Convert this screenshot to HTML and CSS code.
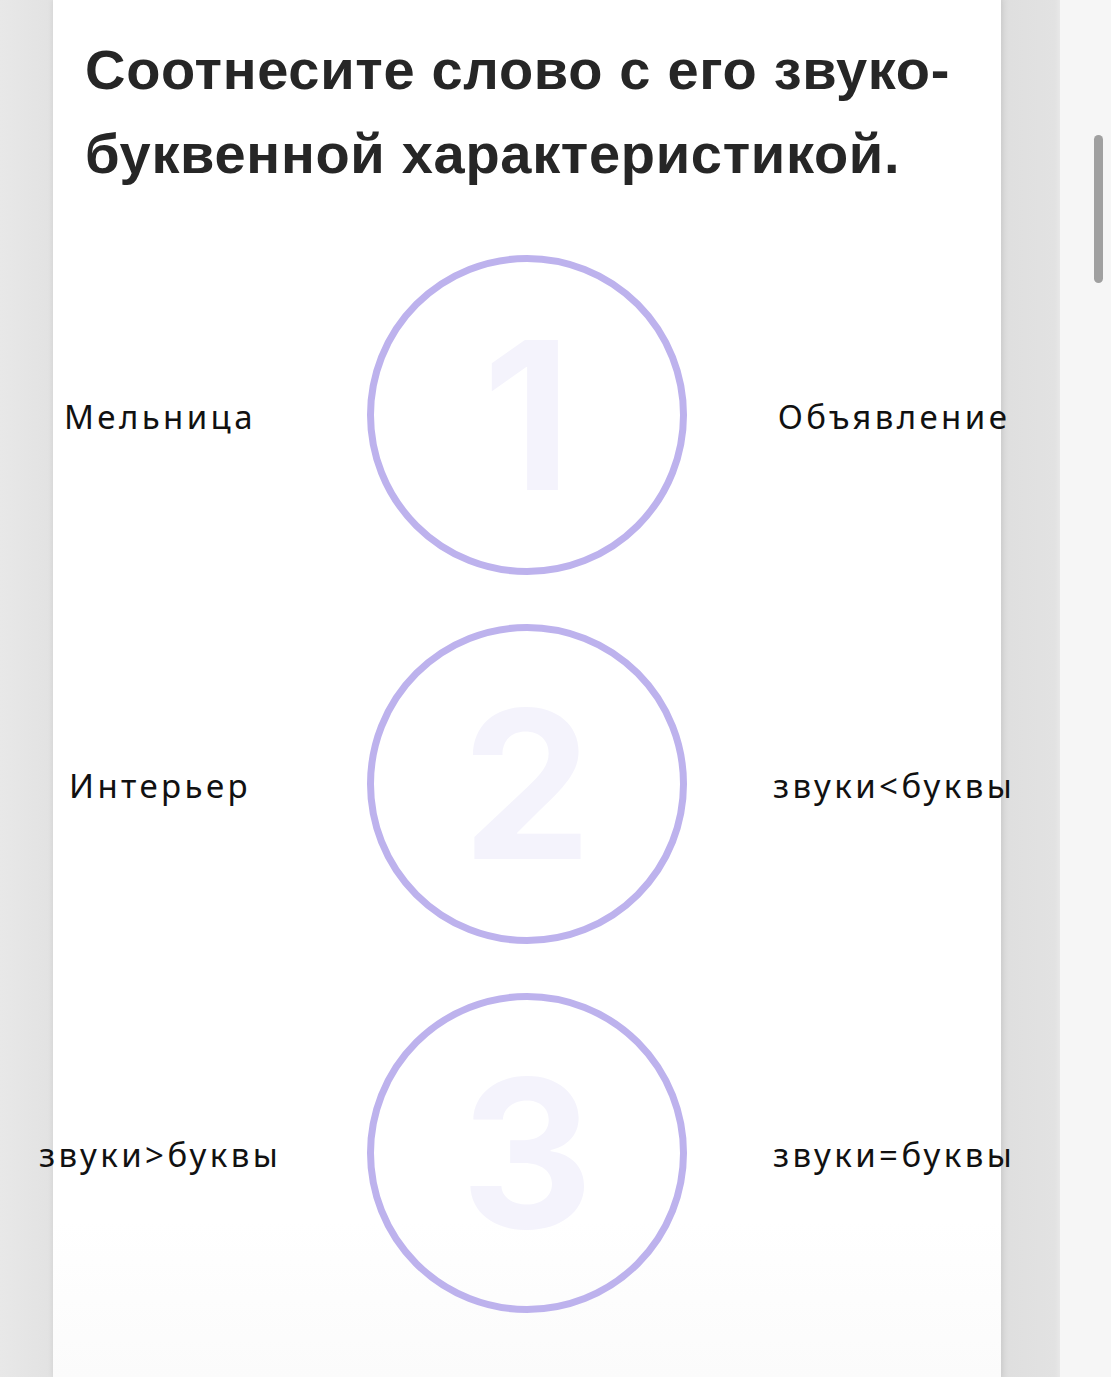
FILE: index.html
```html
<!DOCTYPE html>
<html lang="ru">
<head>
<meta charset="utf-8">
<title>Соотнесите слово</title>
<link rel="stylesheet" href="styles.css">
</head>
<body>
<div class="viewport">
  <main class="sheet">
    <h1 class="title">Соотнесите слово с его звуко-буквенной характеристикой.</h1>
    <div class="match">
      <span class="word">Мельница</span>
      <div class="ring"><span class="num">1</span></div>
      <span class="word">Объявление</span>

      <span class="word">Интерьер</span>
      <div class="ring"><span class="num">2</span></div>
      <span class="word">звуки&lt;буквы</span>

      <span class="word">звуки&gt;буквы</span>
      <div class="ring"><span class="num">3</span></div>
      <span class="word">звуки=буквы</span>
    </div>
  </main>
  <div class="gutter"></div>
  <aside class="rail"><div class="thumb"></div></aside>
</div>
</body>
</html>
```
FILE: styles.css
```css
html, body {
  margin: 0;
  height: 100%;
  overflow: hidden;
}

body {
  background: #e4e4e4;
}

.viewport {
  display: flex;
  height: 100%;
  background: linear-gradient(to right, #e8e8e8, #e2e2e2 53px);
}

.sheet {
  flex: 0 0 948px;
  margin-left: 53px;
  background: linear-gradient(to bottom, #ffffff 1220px, #fbfbfb 1377px);
  box-shadow: 0 0 6px rgba(0, 0, 0, 0.08);
  position: relative;
  z-index: 1;
}

.title {
  margin: 0;
  padding: 28px 30px 0 32px;
  font-family: "Liberation Sans", Arial, sans-serif;
  font-weight: 700;
  font-size: 56px;
  line-height: 84px;
  letter-spacing: 0.7px;
  color: #262626;
}

.match {
  display: grid;
  grid-template-columns: 214px 1fr 214px;
  grid-auto-rows: 320px;
  row-gap: 49px;
  margin-top: 59px;
  align-items: center;
  justify-items: center;
}

.word {
  font-family: "Noto Sans", "DejaVu Sans", sans-serif;
  font-size: 33px;
  letter-spacing: 3.4px;
  color: #111111;
  white-space: nowrap;
  padding-top: 2px;
}

.ring {
  width: 320px;
  height: 320px;
  box-sizing: border-box;
  border: 7px solid #bdb2ed;
  border-radius: 50%;
  display: flex;
  align-items: center;
  justify-content: center;
}

.num {
  font-family: Inter, "Open Sans", sans-serif;
  font-weight: 700;
  font-size: 206px;
  line-height: 1;
  color: #f4f3fc;
}

.gutter {
  flex: 0 0 59px;
  background: linear-gradient(to right, #d6d6d6, #dfdfdf 8px, #e2e2e2 54px, #e8e8e8);
}

.rail {
  flex: 1;
  background: #f6f6f6;
  position: relative;
}

.thumb {
  position: absolute;
  left: 34px;
  top: 135px;
  width: 9px;
  height: 148px;
  border-radius: 5px;
  background: #a0a0a0;
}
```
